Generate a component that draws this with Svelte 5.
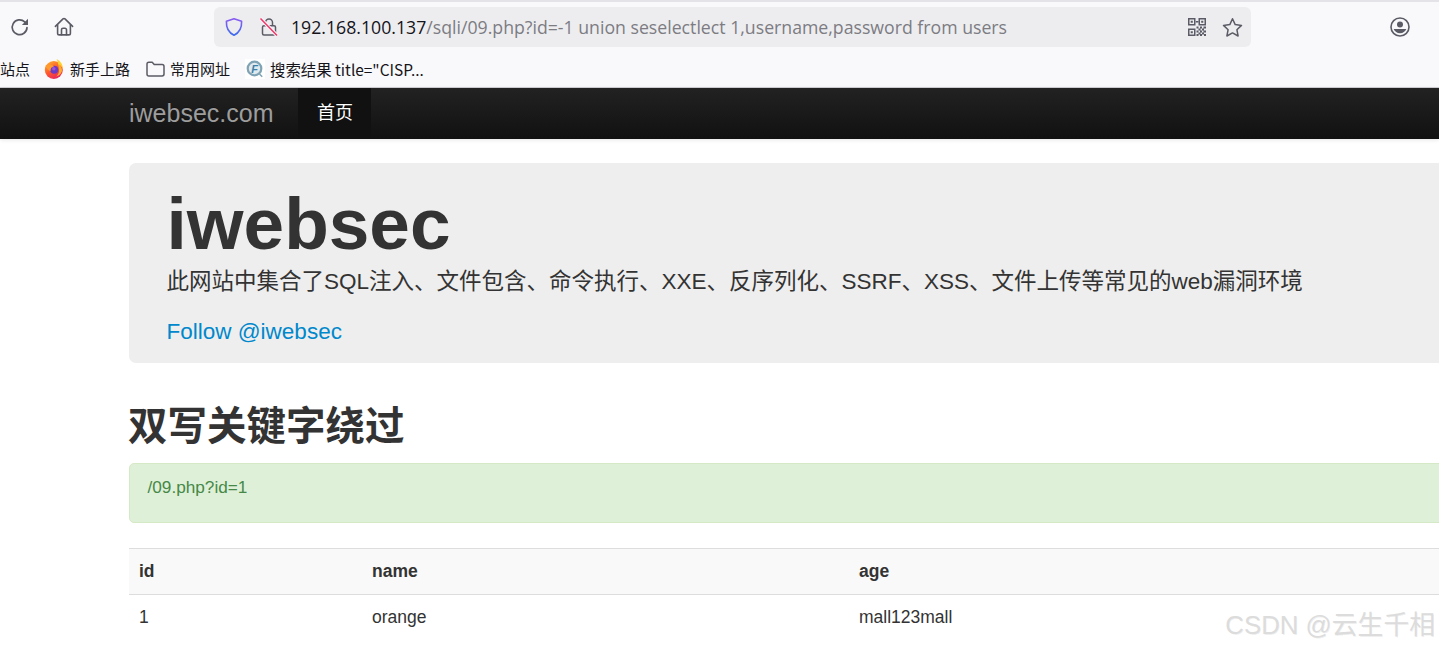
<script>
  const rows = [{ id: '1', name: 'orange', age: 'mall123mall' }];
</script>

<div class="page">
  <header class="chrome">
    <div class="toolbar">
      <button class="tool reload" aria-label="reload">
        <svg width="20" height="20" viewBox="0 0 20 20" fill="none" stroke="#5b5b66" stroke-width="1.7" stroke-linecap="round"><path d="M17 10.600a7.400 7.400 0 1 1-2.300-5.700l1.900 1.900"/><path d="M18 1.800v6.100h-6.100z" fill="#5b5b66" stroke="none"/></svg>
      </button>
      <button class="tool home" aria-label="home">
        <svg width="20" height="20" viewBox="0 0 20 20" fill="none" stroke="#5b5b66" stroke-width="1.600" stroke-linejoin="round" stroke-linecap="round"><path d="M1.400 9.400 9 1.900a1.400 1.400 0 0 1 2 0l7.600 7.500"/><path d="M3.600 7.800v8.400a1.700 1.700 0 0 0 1.700 1.700h9.400a1.700 1.700 0 0 0 1.700-1.700V7.800"/><path d="M7.500 17.800v-5a1.500 1.500 0 0 1 1.500-1.500h2a1.500 1.500 0 0 1 1.500 1.500v5"/></svg>
      </button>
      <div class="urlbar">
        <svg class="shield" width="20" height="20" viewBox="0 0 20 20" fill="none" stroke="url(#sh)" stroke-width="1.600" stroke-linejoin="round"><defs><linearGradient id="sh" x1="0" y1="0" x2="0" y2="1"><stop offset="0" stop-color="#8a5cf0"/><stop offset="1" stop-color="#3d6cf0"/></linearGradient></defs><path d="M10 1.700 17.600 4.300c.3 6.500-2.200 11.400-7.600 14-5.400-2.600-7.900-7.500-7.600-14z"/></svg>
        <svg class="lock" width="20" height="20" viewBox="0 0 20 20" fill="none" stroke-width="1.500"><path d="M3.500 10.300a1.500 1.500 0 0 1 1.500-1.500h10a1.500 1.500 0 0 1 1.500 1.500v6.200a1.500 1.500 0 0 1-1.500 1.500H5a1.500 1.500 0 0 1-1.500-1.500z" stroke="#5b5b66"/><path d="M6.500 8.500V5.500a3.500 3.500 0 0 1 7 0v3" stroke="#5b5b66"/><path d="M1.500 1.500 18 18.500" stroke="#f9f9fb" stroke-width="3.500"/><path d="M1.500 1.500 18 18.500" stroke="#f0386b" stroke-width="1.600"/></svg>
        <span class="url"><span class="host">192.168.100.137</span><span class="rest">/sqli/09.php?id=-1 union seselectlect 1,username,password from users</span></span>
        <svg class="qr" width="18" height="18" viewBox="0 0 18 18" fill="#5b5b66"><path d="M0 0h7.500v7.500H0zM1.500 1.500v4.500h4.500V1.500zM10.500 0H18v7.500h-7.500zM12 1.500v4.500h4.500V1.500zM0 10.500h7.500V18H0zM1.500 12v4.500h4.500V12z" fill-rule="evenodd"/><path d="M2.700 2.700h2.100v2.100H2.700zM13.200 2.700h2.100v2.100h-2.100zM2.700 13.200h2.100v2.100H2.700zM7.800 3h2.700v1.500H7.800zM8.500 8.500h2v2h-2zM12 8.500h2v2h-2zM15.500 8.500H18v2h-2.500zM10.500 10.500h2v2h-2zM14 10.500h2v2h-2zM8.500 12.500h2v2h-2zM12 12.500h2v2h-2zM15.500 12.500H18v2h-2.500zM10.500 14.500h2v2h-2zM14 14.500h2v2h-2zM8.500 16h2v2h-2zM12 16h2v2h-2zM16 16h2v2h-2z"/></svg>
        <svg class="star" width="21" height="21" viewBox="0 0 21 21" fill="none" stroke="#5b5b66" stroke-width="1.500" stroke-linejoin="round"><path d="M10.500 1.800 13.200 7.600l6.300.8-4.600 4.300 1.200 6.300-5.600-3.100-5.600 3.100 1.200-6.300-4.600-4.300 6.300-.8z"/></svg>
      </div>
      <svg class="account" width="20" height="20" viewBox="0 0 20 20" fill="none"><circle cx="10" cy="10" r="9" stroke="#5b5b66" stroke-width="1.600"/><circle cx="10" cy="7.500" r="3" fill="#5b5b66"/><path d="M3.600 12h12.800a7 7 0 0 1-12.800 0z" fill="#5b5b66"/></svg>
    </div>
    <div class="bookmarks">
      <span class="bm first">站点</span>
      <span class="bm fox">
        <svg width="20" height="20" viewBox="0 0 20 20"><defs><linearGradient id="fx" x1="0.100" y1="0.100" x2="0.600" y2="1"><stop offset="0" stop-color="#ffa62e"/><stop offset=".5" stop-color="#ff5a2c"/><stop offset="1" stop-color="#e8265e"/></linearGradient></defs><circle cx="9.800" cy="11" r="9" fill="url(#fx)"/><path d="M12.500 0c3.500 1.800 6.500 5 6.300 10-1-2.500-2.500-4-4.800-4.500 0-2-.5-3.800-1.500-5.500z" fill="#ffd02e"/><path d="M14 5c3 1.500 4 4 4 7-1 3-3 5-6 5.500 2-1.500 3.500-4 3-7-.2-2-.5-3.500-1-5.500z" fill="#ffae2e"/><circle cx="10.200" cy="10.800" r="4" fill="#6a3bc4"/><circle cx="9.800" cy="9.800" r="1.800" fill="#a04fd8"/><path d="M1.500 6.500c2.500-1.500 6-1.500 8.500 1-2 .3-3.800 1.800-3.500 4.500-2.800-.5-4.300-2.800-5-5.500z" fill="#ff9a2e"/></svg>
        新手上路
      </span>
      <span class="bm folder">
        <svg width="19" height="16" viewBox="0 0 19 16" fill="none" stroke="#5b5b66" stroke-width="1.500" stroke-linejoin="round"><path d="M1 3a1.800 1.800 0 0 1 1.800-1.800h3.400l2 2.300h7.900A1.900 1.900 0 0 1 18 5.400v7.700a1.900 1.900 0 0 1-1.900 1.900H2.900A1.900 1.900 0 0 1 1 13.100z"/></svg>
        常用网址
      </span>
      <span class="bm fofa">
        <span class="favicon">
          <svg width="18" height="18" viewBox="0 0 18 18" fill="none"><circle cx="8.500" cy="8.500" r="6.800" fill="#dfe9ee" stroke="#7fa3b5" stroke-width="2.200"/><path d="m13.500 14 2.700 2.700" stroke="#7fa3b5" stroke-width="1.500"/><text x="8.500" y="12.500" text-anchor="middle" class="f">F</text></svg>
        </span>
        搜索结果 title="CISP...
      </span>
    </div>
  </header>

  <nav class="navbar">
    <a class="brand" href="#top">iwebsec.com</a>
    <a class="navlink" href="#top">首页</a>
  </nav>

  <main class="container">
    <section class="jumbotron">
      <h1>iwebsec</h1>
      <p class="lead">此网站中集合了SQL注入、文件包含、命令执行、XXE、反序列化、SSRF、XSS、文件上传等常见的web漏洞环境</p>
      <a class="follow" href="#top">Follow @iwebsec</a>
    </section>

    <h2>双写关键字绕过</h2>

    <div class="alert">/09.php?id=1</div>

    <table>
      <thead>
        <tr><th class="c1">id</th><th class="c2">name</th><th class="c3">age</th></tr>
      </thead>
      <tbody>
        {#each rows as row}
          <tr><td>{row.id}</td><td>{row.name}</td><td>{row.age}</td></tr>
        {/each}
      </tbody>
    </table>
  </main>

  <div class="watermark">CSDN @云生千相</div>
</div>

<style>
  :global(body) {
    margin: 0;
    background: #fff;
    overflow: hidden;
  }
  .page {
    position: relative;
    width: 1439px;
    height: 651px;
    overflow: hidden;
    font-family: "Liberation Sans", "Noto Sans CJK SC", sans-serif;
    color: #333;
  }
  .chrome {
    height: 85px;
    background: #f9f9fb;
    border-top: 2px solid #e4e4e8;
    border-bottom: 1px solid #cfcfd4;
  }
  .toolbar {
    height: 50px;
    display: flex;
    align-items: center;
    padding-left: 10px;
  }
  .tool {
    border: 0;
    padding: 0;
    background: none;
    width: 20px;
    height: 20px;
    display: flex;
  }
  .home {
    margin-left: 24px;
  }
  .urlbar {
    margin-left: 140px;
    width: 1037px;
    height: 40px;
    box-sizing: border-box;
    background: #ededf0;
    border-radius: 6px;
    display: flex;
    align-items: center;
    padding-left: 10px;
    flex: none;
  }
  .lock {
    margin-left: 15px;
  }
  .url {
    margin-left: 12px;
    flex: 1;
    font-family: "Open Sans", "Noto Sans", sans-serif;
    font-size: 17.7px;
    white-space: nowrap;
  }
  .host {
    color: #15141a;
  }
  .rest {
    color: #7c7c82;
  }
  .qr {
    margin-right: 16px;
  }
  .star {
    margin-right: 8px;
  }
  .account {
    margin-left: 139px;
  }
  .bookmarks {
    height: 33px;
    display: flex;
    align-items: center;
    font-family: "Noto Sans CJK SC", "Noto Sans", sans-serif;
    font-size: 15px;
    color: #15141a;
    white-space: nowrap;
  }
  .bm {
    display: flex;
    align-items: center;
    gap: 5px;
  }
  .fox {
    margin-left: 14px;
    gap: 6px;
  }
  .folder {
    margin-left: 16px;
  }
  .fofa {
    margin-left: 15px;
    font-size: 15.4px;
  }
  .favicon {
    display: flex;
    background: #fff;
    padding: 1px;
  }
  .f {
    font: italic bold 11px "Liberation Sans", sans-serif;
    fill: #3e7fa8;
  }
  .navbar {
    height: 51px;
    background: linear-gradient(#222, #111);
    display: flex;
    padding-left: 129px;
    box-shadow: 0 1px 4px rgba(0, 0, 0, 0.1);
    text-shadow: 0 -1px 0 rgba(0, 0, 0, 0.25);
  }
  .brand {
    font-size: 25px;
    line-height: 51px;
    color: #9d9d9d;
    text-decoration: none;
    margin-right: 24px;
  }
  .navlink {
    width: 73px;
    text-align: center;
    text-indent: 2px;
    font-size: 18px;
    line-height: 50px;
    color: #fff;
    background: #111;
    text-decoration: none;
  }
  .container {
    padding-left: 129px;
    padding-top: 24px;
    width: 1500px;
  }
  .jumbotron {
    height: 200px;
    box-sizing: border-box;
    background: #eee;
    border-radius: 7px;
    padding: 22px 0 0 37.5px;
  }
  h1 {
    margin: 0;
    font-size: 73px;
    line-height: 78px;
    font-weight: 700;
    color: #333;
  }
  .lead {
    margin: 1px 0 0;
    font-size: 22.5px;
    line-height: 36px;
    color: #333;
    white-space: nowrap;
  }
  .follow {
    display: block;
    margin-top: 14px;
    font-size: 22.5px;
    line-height: 36px;
    color: #0088cc;
    text-decoration: none;
  }
  h2 {
    margin: 38px 0 0;
    font-size: 39.5px;
    line-height: 50px;
    font-weight: 700;
    color: #333;
    text-indent: -1px;
  }
  .alert {
    margin-top: 12px;
    height: 60px;
    box-sizing: border-box;
    padding: 13px 18px;
    background: #dff0d8;
    border: 1px solid #d6e9c6;
    border-radius: 5px;
    color: #468847;
    font-size: 17.2px;
    line-height: 21px;
    text-indent: -0.5px;
  }
  table {
    margin-top: 25px;
    width: 1500px;
    border-collapse: collapse;
    table-layout: fixed;
    font-size: 17.5px;
  }
  th,
  td {
    text-align: left;
    padding: 0 10px;
    height: 45px;
    border-top: 1px solid #ddd;
  }
  thead tr {
    background: #f9f9f9;
  }
  .c1 {
    width: 213px;
  }
  .c2 {
    width: 467px;
  }
  .watermark {
    position: absolute;
    right: 4px;
    bottom: 8px;
    font-size: 25.8px;
    line-height: 36px;
    color: #dcdcdc;
    white-space: nowrap;
    text-shadow: 1px 1px 0 rgba(0, 0, 0, 0.06);
  }
</style>
